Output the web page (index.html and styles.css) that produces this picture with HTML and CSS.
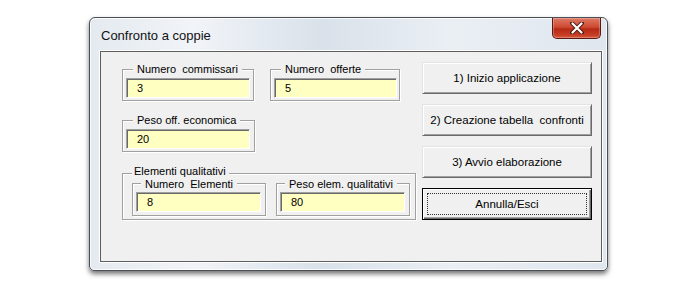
FILE: index.html
```html
<!DOCTYPE html>
<html lang="it">
<head>
<meta charset="utf-8">
<title>Confronto a coppie</title>
<link rel="stylesheet" href="styles.css">
</head>
<body>
<div class="window">
  <div class="titlebar">
    <span class="title">Confronto a coppie</span>
    <div class="close"><svg width="14" height="12" viewBox="0 0 14 12"><path d="M2 1 L12 11 M12 1 L2 11" stroke="#4a1a12" stroke-width="4" stroke-linecap="round"/><path d="M2.5 1.5 L11.5 10.5 M11.5 1.5 L2.5 10.5" stroke="#fff" stroke-width="2.2" stroke-linecap="round"/></svg></div>
  </div>
  <div class="client">
    <div class="left">
      <div class="row">
        <div class="frame f1"><span class="cap">Numero  commissari</span><div class="input i1">3</div></div>
        <div class="frame f2"><span class="cap">Numero  offerte</span><div class="input i2">5</div></div>
      </div>
      <div class="frame f3"><span class="cap">Peso off. economica</span><div class="input i1">20</div></div>
      <div class="frame outer"><span class="cap">Elementi qualitativi</span>
        <div class="inner-row">
          <div class="frame fa"><span class="cap">Numero  Elementi</span><div class="input ia">8</div></div>
          <div class="frame fb"><span class="cap">Peso elem. qualitativi</span><div class="input ib">80</div></div>
        </div>
      </div>
    </div>
    <div class="buttons">
      <div class="btn">1) Inizio applicazione</div>
      <div class="btn">2) Creazione tabella  confronti</div>
      <div class="btn">3) Avvio elaborazione</div>
      <div class="btn default"><span class="focus">Annulla/Esci</span></div>
    </div>
  </div>
</div>
</body>
</html>
```
FILE: styles.css
```css
html, body { margin: 0; padding: 0; background: #fff; }
body { width: 694px; height: 286px; overflow: hidden; padding-top: 17px; box-sizing: border-box; font-family: "Liberation Sans", Arial, sans-serif; }

.window {
  margin-left: 89px;
  width: 519px;
  height: 254px;
  box-sizing: border-box;
  border: 1px solid #4a4f55;
  border-radius: 6px 6px 5px 5px;
  background: linear-gradient(90deg, #e4eaf0 0%, #f1f4f8 20%, #d9e1ea 45%, #eaeff4 70%, #dfe6ee 100%);
  padding: 0 5px 8px 10px;
  box-shadow: 0 3px 5px rgba(0,0,0,.55), inset 0 0 0 1px rgba(255,255,255,.8);
  display: flex;
  flex-direction: column;
}
.titlebar { height: 33px; display: flex; align-items: flex-start; }
.title { font-size: 13px; color: #111; margin-top: 10px; margin-left: 1px; }
.close {
  margin-left: auto;
  margin-right: 1px;
  width: 49px; height: 21px;
  box-sizing: border-box;
  border: 1px solid #5a1a10; border-top: none;
  border-radius: 0 0 5px 5px;
  background: linear-gradient(180deg, #dc7a66 0%, #cf4a32 45%, #b52a14 55%, #c73c24 85%, #d65a40 100%);
  display: flex; align-items: center; justify-content: center;
  box-shadow: inset 0 0 0 1px rgba(255,255,255,.25);
}

.client {
  flex: 1;
  background: #f0f0f0;
  border: 1px solid #5e5e5e;
  box-shadow: 0 0 0 1px #fff;
  display: flex;
}
.left { width: 321px; padding-left: 21px; box-sizing: border-box; padding-top: 17px; }
.row { display: flex; gap: 16px; }

.frame {
  position: relative;
  box-sizing: border-box;
  border: 1px solid #a0a0a0;
  box-shadow: 1px 1px 0 #fff, inset 1px 1px 0 #fff;
  padding: 8px 0 0 3px;
}
.cap {
  position: absolute;
  top: -7px; left: 10px;
  padding: 0 4px;
  background: #f0f0f0;
  font-size: 11px; line-height: 13px;
  color: #000; white-space: pre;
}
.f1 { width: 132px; height: 32px; }
.f2 { width: 130px; height: 32px; }
.f3 { width: 133px; height: 32px; margin-top: 19px; }
.outer { width: 294px; height: 47px; margin-top: 21px; padding: 9px 0 0 9px; }
.outer > .cap { left: 9px; top: -8px; line-height: 11px; padding: 0 3px 0 2px; }
.inner-row { display: flex; gap: 10px; }
.fa, .fb { width: 134px; height: 33px; padding: 8px 0 0 3px; }
.fa > .cap, .fb > .cap { left: 8px; top: -5px; line-height: 11px; }

.input {
  box-sizing: border-box;
  height: 20px;
  background: #ffffc2;
  border: 1px solid; border-color: #a0a0a0 #fff #fff #a0a0a0;
  box-shadow: inset 1px 1px 0 #696969;
  font-size: 11px; line-height: 18px;
  padding-left: 10px; color: #000;
}
.i1 { width: 124px; }
.i2 { width: 123px; }
.ia, .ib { width: 125px; }

.buttons { display: flex; flex-direction: column; gap: 10px; padding-top: 10px; width: 170px; }
.btn {
  box-sizing: border-box;
  height: 32px;
  background: #f0f0f0;
  border: 1px solid; border-color: #e3e3e3 #696969 #696969 #e3e3e3;
  box-shadow: inset 1px 1px 0 #fff, inset -1px -1px 0 #a0a0a0;
  font-size: 11.5px; color: #000; white-space: pre;
  display: flex; align-items: center; justify-content: center;
}
.btn.default {
  border: 1px solid #000;
  box-shadow: inset 1px 1px 0 #fff, inset -1px -1px 0 #696969, inset -2px -2px 0 #a0a0a0;
  padding: 4px;
}
.focus {
  flex: 1; align-self: stretch;
  border: 1px dotted #333;
  display: flex; align-items: center; justify-content: center;
}
```
